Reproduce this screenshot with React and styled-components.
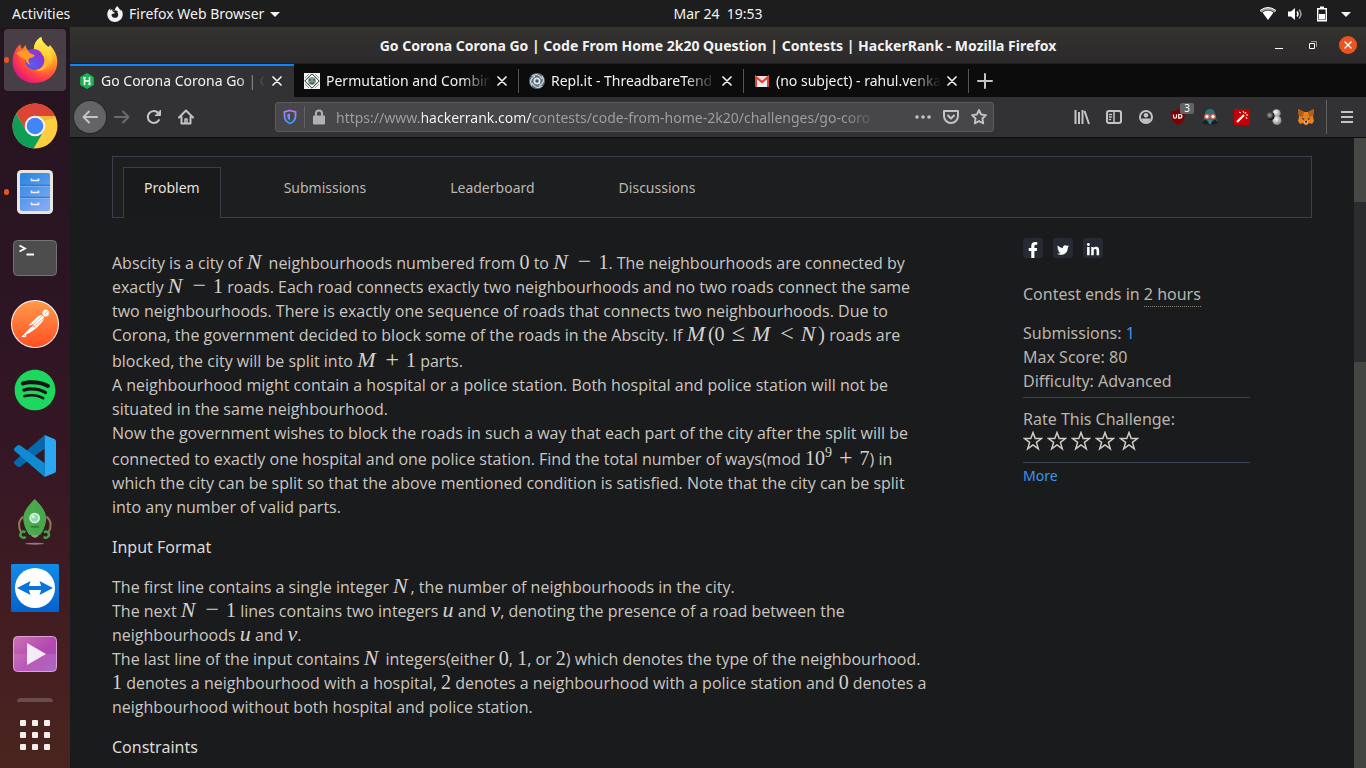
import React from 'react';
import styled, { createGlobalStyle } from 'styled-components';
import { FaSpotify, FaFacebookF, FaTwitter, FaLinkedinIn } from 'react-icons/fa';
import { SiFirefoxbrowser, SiPostman } from 'react-icons/si';

const UI = '"Noto Sans", "Open Sans", sans-serif';
const BODY = '"Open Sans", "Noto Sans", sans-serif';

const GlobalStyle = createGlobalStyle`
  * { box-sizing: border-box; }
  html, body { margin: 0; height: 100%; overflow: hidden; background: #181a1b; }
  #root { height: 100%; }
  button { border: 0; padding: 0; margin: 0; background: none; color: inherit; font: inherit; cursor: pointer; }
  a { color: inherit; text-decoration: none; }
  svg { display: block; }
`;

const Desktop = styled.div`
  display: flex;
  flex-direction: column;
  height: 100vh;
  font-family: ${UI};
  font-size: 14px;
  color: #f2f2f2;
`;

/* System bar */
const TopBar = styled.header`
  display: grid;
  grid-template-columns: 70px 1fr auto 1fr;
  align-items: center;
  flex: none;
  height: 27px;
  background: #1d1d1d;
`;
const Activities = styled.button`
  padding-left: 12px;
  text-align: left;
  white-space: nowrap;
`;
const AppMenu = styled.button`
  display: flex;
  align-items: center;
  gap: 6px;
  padding-left: 37px;
`;
const Clock = styled.button`
  white-space: pre;
`;
const Status = styled.div`
  display: flex;
  align-items: center;
  justify-content: flex-end;
  gap: 11px;
  padding-right: 15px;
`;

const Workspace = styled.div`
  display: flex;
  flex: 1;
  min-height: 0;
`;

/* Dock */
const Dock = styled.nav`
  display: flex;
  flex-direction: column;
  align-items: center;
  gap: 4px;
  flex: none;
  width: 70px;
  padding-top: 2px;
  overflow: hidden;
  background: linear-gradient(#23141e 0%, #2c1523 35%, #361724 60%, #451f21 85%, #4a251e 100%);
`;
const DockButton = styled.button`
  position: relative;
  display: grid;
  place-items: center;
  flex: none;
  width: 62px;
  height: 62px;
  border-radius: 4px;
  background: ${(p) => (p.$active ? '#473e46' : 'none')};
  &::before {
    content: ${(p) => (p.$running ? '""' : 'none')};
    position: absolute;
    left: 0;
    top: 28px;
    width: 5px;
    height: 6px;
    border-radius: 3px;
    background: #e95420;
  }
`;
const DockPeek = styled.div`
  flex: none;
  width: 36px;
  height: 4px;
  margin-top: 9px;
  border-radius: 6px 6px 0 0;
  background: #6b4e4b;
`;
const AppGrid = styled.button`
  display: grid;
  grid-template-columns: repeat(3, 6px);
  gap: 6px;
  margin-top: 14px;
  & > span {
    height: 6px;
    border-radius: 1px;
    background: #f2efec;
  }
`;

/* Browser window */
const Browser = styled.main`
  display: flex;
  flex-direction: column;
  flex: 1;
  min-width: 0;
  background: #323234;
`;
const TitleBar = styled.div`
  display: grid;
  grid-template-columns: 110px 1fr 110px;
  align-items: center;
  flex: none;
  height: 37px;
  padding: 0 9px;
  background: linear-gradient(#353330, #2b292a);
  border-bottom: 1px solid #1e1d1e;
`;
const WindowTitle = styled.h1`
  margin: 0;
  overflow: hidden;
  white-space: nowrap;
  text-align: center;
  font-size: 14px;
  font-weight: 700;
`;
const WindowButtons = styled.div`
  display: flex;
  align-items: center;
  justify-content: flex-end;
  gap: 18px;
`;
const TabStrip = styled.div`
  display: flex;
  align-items: center;
  flex: none;
  height: 33px;
  background: #0c0c0d;
`;
const BrowserTab = styled.div`
  display: flex;
  align-items: center;
  gap: 6px;
  width: ${(p) => (p.$active ? 224 : 225)}px;
  height: 33px;
  padding: 0 12px 0 ${(p) => (p.$active ? 9 : 10)}px;
  background: ${(p) => (p.$active ? '#323234' : 'linear-gradient(#555, #555) right center / 1px 24px no-repeat')};
  border-top: 2px solid ${(p) => (p.$active ? '#0a84ff' : '#0c0c0d')};
  border-bottom: 2px solid transparent;
`;
const TabTitle = styled.button`
  flex: 1;
  min-width: 0;
  overflow: hidden;
  text-align: left;
  white-space: nowrap;
  mask-image: linear-gradient(to right, #000 calc(100% - 30px), transparent);
`;
const IconButton = styled.button`
  position: relative;
  display: grid;
  place-items: center;
  flex: none;
  width: ${(p) => p.$w || 32}px;
  height: ${(p) => p.$w || 32}px;
  border-radius: 50%;
  color: ${(p) => (p.$dim ? '#6c6c6e' : '#c4c4c5')};
  background: ${(p) => (p.$round ? '#646466' : 'none')};
  box-shadow: ${(p) => (p.$round ? '0 0 0 1px #29292b' : 'none')};
`;
const NavBar = styled.div`
  display: flex;
  align-items: center;
  flex: none;
  height: 41px;
  padding: 0 3px 0 4px;
  border-bottom: 1px solid #0c0c0d;
  background: #323234;
`;
const UrlBar = styled.div`
  display: flex;
  align-items: center;
  flex: 1;
  height: 30px;
  margin: 0 72px 0 73px;
  padding: 0 0 0 6px;
  border: 1px solid #5b5b5d;
  border-radius: 3px;
  background: #474749;
`;
const Rule = styled.span`
  flex: none;
  width: 1px;
  height: ${(p) => p.$h}px;
  margin: 0 ${(p) => p.$gap}px;
  background: #626264;
`;
const UrlInput = styled.input`
  flex: 1;
  min-width: 0;
  height: 28px;
  margin: 0 30px 0 9px;
  padding: 0;
  border: 0;
  outline: 0;
  font-family: ${UI};
  font-size: 14px;
  color: transparent;
  background: linear-gradient(to right, #a0a0a2 86px, #f9f9fa 86px, #f9f9fa 195px, #a0a0a2 195px, #a0a0a2 calc(100% - 36px), transparent);
  background-clip: text;
`;
const Badge = styled.span`
  position: absolute;
  right: 0;
  top: 2px;
  width: 14px;
  height: 11px;
  border-radius: 2px;
  background: #646466;
  color: #fff;
  font-size: 10px;
  line-height: 11px;
`;

/* Page */
const Viewport = styled.div`
  display: flex;
  flex: 1;
  min-height: 0;
  background: #1a1b1d;
`;
const Page = styled.div`
  flex: 1;
  min-width: 0;
  padding: 18px 42px 0;
  overflow: hidden;
  font-family: ${BODY};
  font-size: 16px;
  line-height: 24px;
  color: #cbc7c0;
`;
const Scrollbar = styled.div`
  flex: none;
  width: 12px;
  background: linear-gradient(#464846 64px, #2a2c2e 64px, #2a2c2e 224px, #434543 224px);
`;
const Tabs = styled.nav`
  display: flex;
  gap: 42px;
  height: 62px;
  padding: 10px 10px 0;
  border: 1px solid #3b3f4c;
  background: #1c1e1f;
`;
const PageTab = styled.a`
  height: 51px;
  padding: 0 20px;
  border: 1px solid ${(p) => (p.$active ? '#3b3f4c' : 'transparent')};
  border-bottom: 0;
  background: ${(p) => (p.$active ? '#181a1b' : 'none')};
  color: ${(p) => (p.$active ? '#e4e1dc' : '#bdb8af')};
  font-family: ${UI};
  font-size: 14px;
  line-height: 40px;
`;
const Columns = styled.div`
  display: flex;
  justify-content: space-between;
`;
const Statement = styled.article`
  padding-top: 33px;
  white-space: nowrap;
`;
const Paragraph = styled.p`
  margin: 0 0 16px;
`;
const Line = styled.span`
  display: block;
  height: ${(p) => (p.$tall ? 26 : 24)}px;
  padding-top: ${(p) => (p.$tall ? 2 : 0)}px;
`;
const Heading = styled.h2`
  margin: 0 0 16px;
  font-family: ${UI};
  font-size: 16px;
  font-weight: 400;
  color: #dedad4;
`;
const MathText = styled.span`
  font-family: "Liberation Serif", serif;
  font-size: 20px;
  line-height: 20px;
  color: #d6d2cc;
`;
const Var = styled.i`
  padding-right: ${(p) => p.$after || 0}px;
  font-size: 22px;
  line-height: 0;
`;
const Op = styled.span`
  padding: 0 7px;
  font-size: 24px;
  line-height: 0;
`;
const Sup = styled.sup`
  font-size: 14px;
  line-height: 0;
  vertical-align: 8px;
`;
const Side = styled.aside`
  width: 227px;
  margin-right: 62px;
  padding-top: 20px;
  font-family: ${UI};
  color: #b9b4ab;
`;
const Social = styled.div`
  display: flex;
  gap: 10px;
  margin-bottom: 24px;
`;
const SocialLink = styled.a`
  display: grid;
  place-items: center;
  width: 20px;
  height: 20px;
  padding-top: 3px;
  border-radius: 3px;
  background: #262b33;
  color: #fff;
`;
const Fact = styled.p`
  margin: 0 0 ${(p) => (p.$gap || 0)}px;
`;
const Deadline = styled.span`
  display: inline-block;
  border-bottom: 1px dotted #8c877f;
`;
const Blue = styled.a`
  color: #3d96e6;
  font-size: ${(p) => p.$size || 16}px;
`;
const Divider = styled.hr`
  height: 1px;
  margin: 4px 0 ${(p) => (p.$tight ? 0 : 9)}px;
  border: 0;
  background: #3b4350;
`;
const Stars = styled.div`
  display: flex;
  gap: 4px;
  margin-bottom: 11px;
`;

const Svg = ({ s = 16, box = 16, children, ...rest }) => (
  <svg width={s} height={s} viewBox={typeof box === 'string' ? box : `0 0 ${box} ${box}`} fill="none" aria-hidden="true" {...rest}>
    {children}
  </svg>
);
const Stroke = (p) => <Svg stroke="currentColor" strokeWidth="2" strokeLinecap="round" strokeLinejoin="round" {...p} />;

const CloseGlyph = () => (
  <Stroke s={10} box={10} strokeWidth="1.7" color="#f2f2f2"><path d="M1 1l8 8M9 1l-8 8" /></Stroke>
);
const Caret = () => <Svg s={10} box={10}><path d="M0 3h10L5 8z" fill="#f2f2f2" /></Svg>;

const Firefox = () => (
  <Svg s={48} box="34 45 144 144">
    <defs>
      <radialGradient id="ffBody" cx=".78" cy=".15" r="1">
        <stop offset="0" stopColor="#fff44f" /><stop offset=".32" stopColor="#ffb52e" />
        <stop offset=".55" stopColor="#ff7a2c" /><stop offset=".76" stopColor="#ff3a4c" /><stop offset="1" stopColor="#d9108a" />
      </radialGradient>
      <radialGradient id="ffGlobe" cx=".4" cy=".7" r=".7">
        <stop offset="0" stopColor="#5b5fe8" /><stop offset=".6" stopColor="#7542e0" /><stop offset="1" stopColor="#a02dc6" />
      </radialGradient>
      <linearGradient id="ffFlame" x1="0" y1="0" x2="0" y2="1">
        <stop offset="0" stopColor="#fff44f" /><stop offset=".6" stopColor="#ffc933" /><stop offset="1" stopColor="#ff8a2c" stopOpacity="0" />
      </linearGradient>
    </defs>
    <path d="M62 70c1 6 2 10 5 14l12-12c0 8 2 12 6 16l18 2c-2-18 6-34 22-42 1 14 10 20 20 30 4-2 5-4 6-6 14 16 22 32 22 49 0 40-30 65-67 65s-67-26-67-64c0-22 8-40 23-52z" fill="url(#ffBody)" />
    <path d="M103 90c-2-18 6-34 22-42 1 14 10 20 20 30 14 16 18 44 4 64-10 14-30 18-42 14 30-8 38-44 14-60z" fill="url(#ffFlame)" />
    <circle cx="105" cy="118" r="29" fill="url(#ffGlobe)" />
    <path d="M50 97c8-9 22-10 32-7 6 8 16 7 23 13 0 6-12 8-17 10-4 6 2 13 4 20-8-5-14-10-15-18-8-4-18-7-27-18z" fill="#ff9a26" />
    <path d="M84 90c14-10 32-6 42 6-12-4-18 0-24 4z" fill="#8b3ad6" />
    <path d="M133 99c10 22-2 47-27 49 32 8 52-22 27-49z" fill="#ffb52e" />
  </Svg>
);
const Chrome = () => (
  <Svg s={48} box={48}>
    <circle cx="24" cy="24" r="22.5" fill="#ffcd40" />
    <path d="M5.2 11.7A22.5 22.5 0 0 1 44.2 14H24l-8.7 15z" fill="#dc4437" />
    <path d="M5.2 11.7A22.5 22.5 0 0 0 22.6 46.5L32.7 29H15.3z" fill="#109d58" />
    <path d="M24 14h20.2l.8 2-14 3z" fill="#e0a52e" opacity=".5" />
    <circle cx="24" cy="24" r="10.3" fill="#f4f4f4" /><circle cx="24" cy="24" r="8.3" fill="#4285f4" />
  </Svg>
);
const Files = () => (
  <Svg s={48} box={48}>
    <defs><linearGradient id="cab" x1="0" y1="0" x2=".6" y2="1"><stop stopColor="#2383dd" /><stop offset="1" stopColor="#7fa8f5" /></linearGradient></defs>
    <rect x="6" y="2" width="36" height="44" rx="4.5" fill="#eae6df" />
    <rect x="9" y="5" width="30" height="38" rx="2" fill="url(#cab)" />
    <path d="M9 17.3h30M9 29.3h30" stroke="#1767b3" /><path d="M9 18.3h30M9 30.3h30" stroke="#8cc0f5" strokeWidth=".8" />
    <path d="M20.5 10.5v2h7v-2M20.5 22.5v2h7v-2M20.5 34.5v2h7v-2" stroke="#f1eee9" strokeWidth="1.6" />
  </Svg>
);
const Terminal = () => (
  <Svg s={48} box={48}>
    <rect x="2.5" y="6.500" width="43" height="35" rx="4" fill="#4d4d4d" stroke="#737373" />
    <path d="M8.500 11.500l5.500 3-5.500 3M15.500 20.500h7.500" stroke="#fff" strokeWidth="1.8" />
  </Svg>
);
const Postman = () => (
  <Svg s={48} box={48}>
    <defs><linearGradient id="pm" x1="0" y1="0" x2="0" y2="1"><stop stopColor="#ff9a4a" /><stop offset="1" stopColor="#ff5023" /></linearGradient></defs>
    <circle cx="24" cy="24" r="24" fill="#fff" />
    <SiPostman x="1" y="1" size={46} style={{ fill: 'url(#pm)' }} />
  </Svg>
);
const Spotify = () => (
  <Svg s={48} box={48}>
    <circle cx="24" cy="24" r="19" fill="#191414" />
    <FaSpotify x="3" y="3" size={42} color="#1ed75f" />
  </Svg>
);
const Code = () => (
  <Svg s={48} box="33 36 144 144">
    <path d="M134 45v41L60 140q-5 3-9-1l-8-8q-3-4 1-8z" fill="#0769ad" />
    <path d="M134 171v-41L60 76q-5-3-9 1l-8 8q-3 4 1 8z" fill="#108bd2" />
    <path d="M134 45l29 12q5 2 5 7v88q0 5-5 7l-29 12z" fill="#29a8f3" />
  </Svg>
);
const Rocket = () => (
  <Svg s={48} box="33 234 144 144">
    <ellipse cx="104" cy="371" rx="28" ry="3" fill="#917b83" />
    <path d="M70 290c-16 12-16 32-6 48M139 290c16 12 16 32 6 48" stroke="#8f7c56" strokeWidth="6" />
    <path d="M92 342h25q-2 10-12 11-11-1-13-11z" fill="#ae9a70" />
    <path d="M104 237c24 24 36 42 34 64-2 18-10 34-18 44H88c-8-10-16-26-18-44-2-22 10-40 34-64z" fill="#4caa4e" />
    <path d="M104 237c24 24 36 42 34 64-2 18-10 34-18 44h-16z" fill="#48a64c" />
    <circle cx="104" cy="294" r="16" fill="#dff3e3" /><circle cx="104" cy="294" r="11" fill="#8fdcb0" /><circle cx="100" cy="290" r="4" fill="#e9fff0" />
    <path d="M94 320h22" stroke="#246b31" strokeWidth="6" strokeDasharray="4 2" />
    <path d="M76 337a9 9 0 1 0 1 13M132 337a9 9 0 1 1-1 13" stroke="#43a548" strokeWidth="7" />
  </Svg>
);
const TeamViewer = () => (
  <Svg s={48} box={48}>
    <defs><linearGradient id="tv" x1="0" y1="0" x2="0" y2="1"><stop stopColor="#128ce6" /><stop offset="1" stopColor="#0562cc" /></linearGradient></defs>
    <rect width="48" height="48" rx="1.5" fill="url(#tv)" /><circle cx="24" cy="24" r="20" fill="#fff" />
    <path d="M6 24l13.500-7-1.600 5h12.200l-1.600-5L42 24l-13.500 7 1.600-5H17.900l1.600 5z" fill="#0b74d8" />
  </Svg>
);
const Player = () => (
  <Svg s={48} box={48}>
    <defs><linearGradient id="pl" x1="0" y1="0" x2="1" y2="1"><stop stopColor="#cd72b3" /><stop offset=".55" stopColor="#b347b2" /><stop offset="1" stopColor="#a058bd" /></linearGradient></defs>
    <rect x="2.500" y="6.500" width="43" height="35" rx="4" fill="url(#pl)" stroke="#dba0d5" />
    <path d="M3 24h42v13q0 4-4 4H7q-4 0-4-4z" fill="#fff" opacity=".1" />
    <path d="M16 13l19 11-19 11z" fill="#f6ecf5" />
  </Svg>
);

const HackerRank = () => (
  <Svg><path d="M8 0l6.800 4v8L8 16l-6.800-4V4z" fill="#1eb454" /><path d="M5.500 4v8M10.500 4v8M5.500 8h5M4.300 5h2.400M9.300 11h2.400" stroke="#fff" strokeWidth="1.5" /></Svg>
);
const Permutation = () => (
  <Svg><path fill="#f2f2f2" d="M0 0h16v16H0z" /><path d="M8 .8L15.200 8 8 15.200.8 8z" stroke="#333" /><path d="M1 5l4-4M11 1l4 4M1 11l4 4M15 11l-4 4" stroke="#999" /><circle cx="8" cy="8" r="4" fill="#7f9f8c" /><path d="M5 7h2M9 7h2M6 10h4" stroke="#243" /></Svg>
);
const Repl = () => (
  <Svg><circle cx="8" cy="8" r="8" fill="#5d6e7a" /><path d="M3 3q6-4 10 3M13 3q4 6-3 10M13 13q-6 4-10-3M3 13q-4-6 3-10" stroke="#c9d2d8" strokeWidth="1.300" /><circle cx="8" cy="8" r="3.500" fill="#dfe5e9" /><circle cx="8" cy="8" r="1.700" fill="#44535e" /></Svg>
);
const Gmail = () => (
  <Svg><path d="M1 3h14v11H1z" fill="#ececec" /><path d="M2 14V4l6 5 6-5v10" stroke="#db4437" strokeWidth="2" /><path d="M1 3h14L8 9z" fill="#f6d9d6" /><path d="M1.500 3.500L8 9l6.500-5.500" stroke="#db4437" strokeWidth="2" /></Svg>
);

const dockItems = [
  ['Firefox', Firefox, true, true],
  ['Chrome', Chrome],
  ['Files', Files, true],
  ['Terminal', Terminal],
  ['Postman', Postman],
  ['Spotify', Spotify],
  ['Visual Studio Code', Code],
  ['Robo 3T', Rocket],
  ['TeamViewer', TeamViewer],
  ['Videos', Player],
];
const browserTabs = [
  ['Go Corona Corona Go | C', HackerRank],
  ['Permutation and Combin', Permutation],
  ['Repl.it - ThreadbareTend', Repl],
  ['(no subject) - rahul.venka', Gmail],
];

const extensions = [
  ['Library', <Stroke strokeLinecap="butt"><path d="M1.500 1v14M5 3v12M8.500 1v14M10.500 2l4.500 13" /></Stroke>],
  ['Sidebars', <Stroke><rect x="1" y="2" width="14" height="12" rx="2" /><path d="M8 2v12M3.500 5.500h2M3.500 8h2M3.500 10.500h1" strokeWidth="1.500" /></Stroke>],
  ['Account', <Svg><circle cx="8" cy="8" r="6" stroke="currentColor" strokeWidth="2" /><circle cx="8" cy="6.300" r="2.300" fill="currentColor" /><path d="M3.500 9.500h9C12 12 10 13 8 13s-4-1-4.500-3.500z" fill="currentColor" /></Svg>],
  ['uBlock', <><Svg><path d="M8 0c2 1.500 4.500 2 7 2 0 7-1 11-7 14C2 13 1 9 1 2c2.500 0 5-.5 7-2z" fill="#800000" /><path d="M3.500 5.500v2.200q0 1.500 1.500 1.500t1.500-1.500V5.500M8.700 5.500v3.700h1.200q2 0 2-1.850t-2-1.850z" stroke="#fff" strokeWidth="1.200" /></Svg><Badge>3</Badge></>],
  ['Privacy mask', <Svg><path d="M8 0c4 0 5 3 5 6l2 6H1l2-6c0-3 1-6 5-6z" fill="#2b7080" /><path d="M3 10l-3 4 3 1.500h10l3-1.500-3-4-3 3H6z" fill="#162029" /><path d="M6 12l2-2 2 2-1 3H7z" fill="#3f7f90" /><circle cx="5" cy="7.500" r="2.200" fill="#fff" stroke="#d0644c" strokeWidth="1.200" /><circle cx="11" cy="7.500" r="2.200" fill="#fff" stroke="#d0644c" strokeWidth="1.200" /></Svg>],
  ['Magic wand', <Svg><path d="M0 0h16v16H0z" fill="#c60000" /><path d="M3 13l7-7" stroke="#fff" strokeWidth="2.200" /><path d="M5 3l2 1M9 2l1 2M12 3l-1 2M14 6l-2 0M13 10l-1-2" stroke="#fff" /></Svg>],
  ['Spheres', <Svg><defs><radialGradient id="sphere" cx=".4" cy=".35" r=".7"><stop stopColor="#fff" /><stop offset="1" stopColor="#777" /></radialGradient><radialGradient id="dark" cx=".4" cy=".4" r=".6"><stop stopColor="#aaa" /><stop offset="1" stopColor="#050505" /></radialGradient></defs><circle cx="10.500" cy="4.500" r="4.200" fill="url(#sphere)" /><circle cx="11" cy="11.500" r="4.500" fill="url(#sphere)" /><circle cx="4.500" cy="7" r="4" fill="url(#dark)" /></Svg>],
  ['MetaMask', <Svg><path d="M0 0l6 3h4l6-3-1 8 1 4-2 3-3-1-2 2H7l-2-2-3 1-2-3 1-4z" fill="#e8821e" /><path d="M0 0l6 3-1 5-4-1zM16 0l-6 3 1 5 4-1z" fill="#b85c1a" /><path d="M3.500 9l3 .5-1 1.500zM12.500 9l-3 .5 1 1.500z" fill="#233447" /><path d="M6 12h4l-.5 2.500h-3z" fill="#d9c8b8" /><path d="M7 12h2v1.500H7z" fill="#161616" /></Svg>],
];

const N = () => <Var $after={3}>N</Var>;
const M = () => <Var $after={3}>M</Var>;
const U = () => <MathText><Var>u</Var></MathText>;
const V = () => <MathText><Var>v</Var></MathText>;
const m = (children) => <MathText>{children}</MathText>;
const NMinus1 = () => m(<><N /><Op>−</Op>1</>);

export default function App() {
  return (
    <Desktop>
      <GlobalStyle />
      <TopBar>
        <Activities>Activities</Activities>
        <AppMenu><SiFirefoxbrowser size={16} aria-hidden="true" />Firefox Web Browser <Caret /></AppMenu>
        <Clock>{'Mar 24  19:53'}</Clock>
        <Status>
          <Svg><path d="M0 5Q8-2 16 5l-1.300 1.500Q8 1 1.300 6.500z" fill="#aaa" /><path d="M2.500 6.500Q8 2.500 13.500 6.500L8 14z" fill="#fff" /><path d="M0 4.500Q8-1.500 16 4.500" stroke="#fff" /></Svg>
          <Svg><path d="M1 5.500h3L8 2v12L4 10.500H1z" fill="#fff" /><path d="M10 5.500q2 2.500 0 5" stroke="#fff" strokeWidth="1.500" /><path d="M12 3.500q4 4.500 0 9" stroke="#aaa" strokeWidth="1.400" /></Svg>
          <Svg><path d="M3.700 2.700h8.600v12H3.700z" stroke="#fff" strokeWidth="1.400" /><path d="M6 .5h4V2H6zM5 8h6v5.500H5z" fill="#fff" /></Svg>
          <Caret />
        </Status>
      </TopBar>

      <Workspace>
        <Dock aria-label="Dock">
          {dockItems.map(([name, Icon, running, active]) => (
            <DockButton key={name} aria-label={name} $running={running} $active={active}><Icon /></DockButton>
          ))}
          <DockPeek />
          <AppGrid aria-label="Show applications">
            {Array.from({ length: 9 }, (_, i) => <span key={i} />)}
          </AppGrid>
        </Dock>

        <Browser>
          <TitleBar>
            <span />
            <WindowTitle>Go Corona Corona Go | Code From Home 2k20 Question | Contests | HackerRank - Mozilla Firefox</WindowTitle>
            <WindowButtons>
              <button aria-label="Minimize"><Svg><path d="M4 11.500h8" stroke="#fff" /></Svg></button>
              <button aria-label="Restore"><Svg><path d="M4.500 6.500h5v5h-5z" stroke="#fff" /><path d="M6 4.500h5.500V10" stroke="#999" /></Svg></button>
              <button aria-label="Close"><Svg s={18} box={18}><circle cx="9" cy="9" r="9" fill="#e95420" /><path d="M5.500 5.500l7 7M12.500 5.500l-7 7" stroke="#fff" strokeWidth="1.400" /></Svg></button>
            </WindowButtons>
          </TitleBar>

          <TabStrip>
            {browserTabs.map(([title, Icon], i) => (
              <BrowserTab key={title} $active={i === 0}>
                <Icon />
                <TabTitle>{title}</TabTitle>
                <button aria-label="Close tab"><CloseGlyph /></button>
              </BrowserTab>
            ))}
            <IconButton aria-label="New tab"><Stroke><path d="M8 1v14M1 8h14" /></Stroke></IconButton>
          </TabStrip>

          <NavBar>
            <IconButton aria-label="Back" $round><Stroke><path d="M15 8H1.500M7 2.500L1.500 8 7 13.500" /></Stroke></IconButton>
            <IconButton aria-label="Forward" $dim><Stroke><path d="M1 8h13.500M9 2.500L14.500 8 9 13.500" /></Stroke></IconButton>
            <IconButton aria-label="Reload"><Stroke><path d="M13 11a6 6 0 1 1-.8-7.200" /><path d="M14.500 1.500v5h-5z" fill="currentColor" strokeWidth="1" /></Stroke></IconButton>
            <IconButton aria-label="Home"><Stroke><path d="M1 8.500L8 1.500l7 7M3.500 8v6.500h9V8" /><path d="M7 14v-4h2v4" strokeWidth="1.500" /></Stroke></IconButton>
            <UrlBar>
              <Svg><defs><linearGradient id="shield" x1="0" y1="0" x2="0" y2="1"><stop stopColor="#b57cf5" /><stop offset="1" stopColor="#2f9dff" /></linearGradient></defs><path d="M8 1.500l5.500 1.500v4c0 4-2 6-5.500 7.500C4.500 13 2.500 11 2.500 7V3z" stroke="url(#shield)" strokeWidth="1.800" /><path d="M8 4.500v7C6 10.500 5.300 9 5.300 7V5.200z" fill="url(#shield)" /></Svg>
              <Rule $h={22} $gap={6} />
              <Svg><path d="M2.500 7h11v8h-11z" fill="#b1b1b3" stroke="#b1b1b3" strokeLinejoin="round" /><path d="M5 7V4.500a3 3 0 0 1 6 0V7" stroke="#b1b1b3" strokeWidth="2" /></Svg>
              <UrlInput aria-label="Address" defaultValue="https://www.hackerrank.com/contests/code-from-home-2k20/challenges/go-coro" />
              <IconButton $w={28} aria-label="Page actions"><Svg><circle cx="2" cy="8" r="1.800" fill="currentColor" /><circle cx="8" cy="8" r="1.800" fill="currentColor" /><circle cx="14" cy="8" r="1.800" fill="currentColor" /></Svg></IconButton>
              <IconButton $w={28} aria-label="Save to Pocket"><Stroke><path d="M1 2h14v5a7 7 0 0 1-14 0z" /><path d="M5 6.500l3 3 3-3" /></Stroke></IconButton>
              <IconButton $w={28} aria-label="Bookmark"><Stroke><path d="M8 1l2.100 4.500 4.900.6-3.600 3.400.9 4.900L8 12l-4.300 2.400.9-4.900L1 6.100l4.900-.6z" strokeWidth="1.800" /></Stroke></IconButton>
            </UrlBar>
            {extensions.map(([name, icon]) => <IconButton key={name} aria-label={name}>{icon}</IconButton>)}
            <Rule $h={34} $gap={4} />
            <IconButton aria-label="Open menu"><Stroke strokeLinecap="butt"><path d="M2 3h12M2 8h12M2 13h12" /></Stroke></IconButton>
          </NavBar>

          <Viewport>
            <Page>
              <Tabs>
                <PageTab href="#problem" $active>Problem</PageTab>
                <PageTab href="#submissions">Submissions</PageTab>
                <PageTab href="#leaderboard">Leaderboard</PageTab>
                <PageTab href="#discussions">Discussions</PageTab>
              </Tabs>
              <Columns>
                <Statement>
                  <Paragraph>
                    <Line>Abscity is a city of {m(<N />)} neighbourhoods numbered from {m('0')} to <NMinus1 />. The neighbourhoods are connected by</Line>
                    <Line>exactly <NMinus1 /> roads. Each road connects exactly two neighbourhoods and no two roads connect the same</Line>
                    <Line>two neighbourhoods. There is exactly one sequence of roads that connects two neighbourhoods. Due to</Line>
                    <Line>Corona, the government decided to block some of the roads in the Abscity. If {m(<><M />(0<Op>≤</Op><M /><Op>&lt;</Op><N />)</>)} roads are</Line>
                    <Line $tall>blocked, the city will be split into {m(<><M /><Op>+</Op>1</>)} parts.</Line>
                    <Line>A neighbourhood might contain a hospital or a police station. Both hospital and police station will not be</Line>
                    <Line>situated in the same neighbourhood.</Line>
                    <Line>Now the government wishes to block the roads in such a way that each part of the city after the split will be</Line>
                    <Line $tall>connected to exactly one hospital and one police station. Find the total number of ways(mod {m(<>10<Sup>9</Sup><Op>+</Op>7</>)}) in</Line>
                    <Line>which the city can be split so that the above mentioned condition is satisfied. Note that the city can be split</Line>
                    <Line>into any number of valid parts.</Line>
                  </Paragraph>
                  <Heading>Input Format</Heading>
                  <Paragraph>
                    <Line>The first line contains a single integer {m(<N />)}, the number of neighbourhoods in the city.</Line>
                    <Line>The next <NMinus1 /> lines contains two integers <U /> and <V />, denoting the presence of a road between the</Line>
                    <Line>neighbourhoods <U /> and <V />.</Line>
                    <Line>The last line of the input contains {m(<N />)} integers(either {m('0')}, {m('1')}, or {m('2')}) which denotes the type of the neighbourhood.</Line>
                    <Line>{m('1')} denotes a neighbourhood with a hospital, {m('2')} denotes a neighbourhood with a police station and {m('0')} denotes a</Line>
                    <Line>neighbourhood without both hospital and police station.</Line>
                  </Paragraph>
                  <Heading>Constraints</Heading>
                </Statement>
                <Side>
                  <Social>
                    <SocialLink href="#facebook" aria-label="Facebook"><FaFacebookF size={16} /></SocialLink>
                    <SocialLink href="#twitter" aria-label="Twitter"><FaTwitter size={12} /></SocialLink>
                    <SocialLink href="#linkedin" aria-label="LinkedIn"><FaLinkedinIn size={14} /></SocialLink>
                  </Social>
                  <Fact $gap={14}>Contest ends in <Deadline>2 hours</Deadline></Fact>
                  <Fact>Submissions: <Blue href="#submissions">1</Blue></Fact>
                  <Fact>Max Score: 80</Fact>
                  <Fact>Difficulty: Advanced</Fact>
                  <Divider />
                  <Fact>Rate This Challenge:</Fact>
                  <Stars>
                    {[1, 2, 3, 4, 5].map((n) => (
                      <button key={n} aria-label={`Rate ${n}`}>
                        <Svg s={20} box={20}><path d="M10 1.500l2.200 6h6.300l-5.100 3.900 1.900 6.500L10 14l-5.300 3.900 1.900-6.500L1.500 7.500h6.300z" stroke="#d0ccc5" strokeWidth="1.500" /></Svg>
                      </button>
                    ))}
                  </Stars>
                  <Divider $tight />
                  <Blue href="#more" $size={14}>More</Blue>
                </Side>
              </Columns>
            </Page>
            <Scrollbar />
          </Viewport>
        </Browser>
      </Workspace>
    </Desktop>
  );
}
